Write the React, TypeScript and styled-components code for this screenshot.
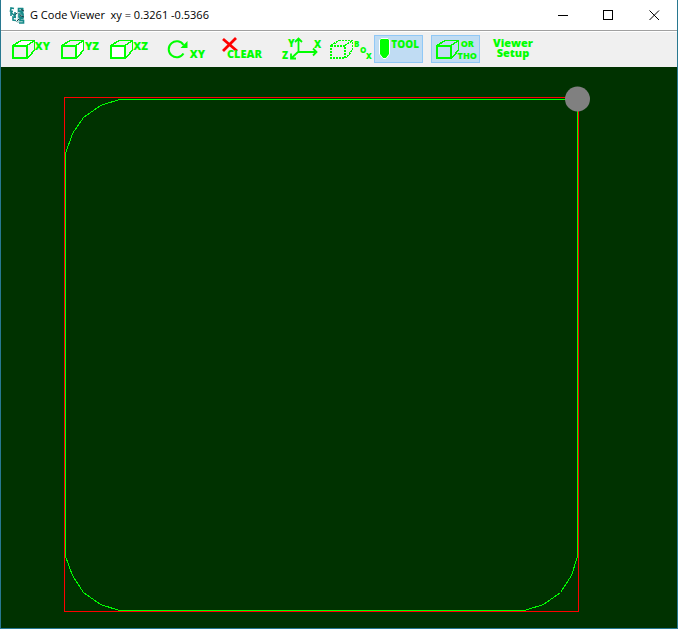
import React from "react";
import styled, { createGlobalStyle } from "styled-components";

const LIME = "#00ff00";

const GlobalStyle = createGlobalStyle`
  * { box-sizing: border-box; }
  body { margin: 0; background: #fff; font-family: "Open Sans", "Noto Sans", sans-serif; }
  button { font: inherit; color: inherit; background: none; padding: 0; }
`;

const Window = styled.div`
  display: flex;
  flex-direction: column;
  height: 100vh;
  margin-right: 2px;
  border: solid #287890;
  border-width: 0 1px 1px;
`;

const TitleBar = styled.header`
  display: flex;
  align-items: center;
  height: 31px;
  padding-left: 8px;
  background: #fff;
  border-bottom: 1px solid #a0a0a0;
`;

const Title = styled.h1`
  flex: 1;
  margin: 0 0 0 4px;
  font-size: 11px;
  font-weight: 400;
  line-height: 16px;
  color: #000;
  white-space: pre;
`;

const WindowButton = styled.button`
  display: grid;
  place-items: center;
  width: 46px;
  height: 30px;
  border: 0;
`;

const Toolbar = styled.div`
  display: flex;
  gap: 8px;
  height: 36px;
  padding: 3px 6px;
  background: #f0f0f0;
  border-top: 1px solid #fff;
`;

const Group = styled.div`
  display: flex;
`;

const Tool = styled.button<{ $pressed?: boolean }>`
  display: grid;
  width: 49px;
  height: 28px;
  border: 1px solid ${(p) => (p.$pressed ? "#90c8f6" : "transparent")};
  background: ${(p) => (p.$pressed ? "#c0dcf3" : "transparent")};
  color: ${LIME};

  > * { grid-area: 1 / 1; }
`;

const Label = styled.span<{ $at?: "start" | "end" }>`
  align-self: ${(p) => p.$at ?? "start"};
  justify-self: end;
  padding: 5px 5px 3px;
  font-size: 11px;
  font-weight: 800;
  line-height: 10px;
`;

const SmallLabel = styled(Label)`
  padding: 3px;
  font-size: 10px;
`;

const StackLabel = styled(Label)`
  display: grid;
  justify-items: center;
  padding: 2px;
  font-size: 9px;
  line-height: 12px;
`;

const CenterLabel = styled(Label)`
  justify-self: center;
  padding: 2px 4px;
  text-align: center;
`;

const Glyph = styled.svg`
  display: block;
  font-size: 10px;
  font-weight: 800;
`;

const Canvas = styled.main`
  flex: 1;
  min-height: 0;
  background: #003200;
`;

const Plot = styled.svg`
  display: block;
  width: 100%;
  height: 100%;
`;

const Art = ({ children }: { children: React.ReactNode }) => (
  <Glyph width="47" height="26" viewBox="0 0 47 26" fill="none" stroke={LIME}>
    {children}
  </Glyph>
);

const FACES = {
  top: "M5 10 14 4.5H27L19 10Z",
  side: "M19 10 27 4.5V14L19 22Z",
  front: "M5 10H19V22H5Z",
};

const Cube = ({ face, dotted }: { face?: keyof typeof FACES; dotted?: boolean }) => (
  <g strokeDasharray={dotted ? "2 1" : undefined} shapeRendering="crispEdges">
    {face && <path d={FACES[face]} fill="#fff" stroke="none" />}
    <path d="M5 10H19V22H5Z" strokeWidth="2" />
    <path d="M5 9.5 13 4.5H26.5V14L19.5 22.5M19 9.5 26.5 4.5" strokeWidth="1.5" />
  </g>
);

const AppIcon = () => (
  <svg width="17" height="17" viewBox="0 0 17 17" fill="none" aria-hidden="true">
    <path d="M9 1h6v15H8z" fill="#b9dedb" />
    <path
      d="M5 1.5 2 1 1.5 4 4 4.5M2 9V5.5L6 9V5M7 10.5 4 10 4 13 7 13.5M9.5 5V1.5h4V4h-4L14 6M10 7h4v3h-4zM14.5 11.5H11v2h3.5V16H10"
      stroke="#168989"
      strokeWidth="1.6"
    />
    <path d="M6 7.5 8.5 6M7.5 14.5 10 12M12 2.5 15 4M11 8.5 15 10" stroke="#173e46" />
  </svg>
);

export default function App() {
  return (
    <>
      <GlobalStyle />
      <Window>
        <TitleBar>
          <AppIcon />
          <Title>{"G Code Viewer  xy = 0.3261 -0.5366"}</Title>
          <WindowButton aria-label="Minimize">
            <svg width="11" height="11" stroke="#000" shapeRendering="crispEdges"><path d="M1 5.5H11" /></svg>
          </WindowButton>
          <WindowButton aria-label="Maximize">
            <svg width="11" height="11" stroke="#000" fill="none" shapeRendering="crispEdges"><path d="M.5 .5h9v9h-9z" /></svg>
          </WindowButton>
          <WindowButton aria-label="Close">
            <svg width="11" height="11" stroke="#000"><path d="M.5 .5 10 10M10 .5 .5 10" /></svg>
          </WindowButton>
        </TitleBar>

        <Toolbar role="toolbar" aria-label="View">
          <Group>
            <Tool><Art><Cube face="top" /></Art><Label>XY</Label></Tool>
            <Tool><Art><Cube face="side" /></Art><Label>YZ</Label></Tool>
            <Tool><Art><Cube face="front" /></Art><Label>XZ</Label></Tool>
          </Group>
          <Group>
            <Tool>
              <Art>
                <path d="M20.5 9A8 8 0 1 0 20.5 17.5" strokeWidth="2" />
                <path d="M24.5 5V12H17.5Z" fill={LIME} stroke="none" />
              </Art>
              <Label $at="end">XY</Label>
            </Tool>
          </Group>
          <Group>
            <Tool>
              <Art><path d="M3 3 17 15M16 2 3 15" stroke="#ff0000" strokeWidth="2.8" /></Art>
              <Label $at="end">CLEAR</Label>
            </Tool>
          </Group>
          <Group>
            <Tool aria-label="Axes">
              <Art>
                <path d="M21.5 3V16H38M21 16 14 22.5M18 6 21.5 2.5 25 6M36 12.5 39.5 16 36 19.5M14 17.5V22.5H19" strokeWidth="1.8" />
                <g fill={LIME} stroke="none">
                  <text x="11" y="11">Y</text>
                  <text x="5" y="23">Z</text>
                  <text x="37" y="12">X</text>
                </g>
              </Art>
            </Tool>
            <Tool aria-label="Box">
              <Art>
                <Cube dotted />
                <g fill={LIME} stroke="none" fontSize="8">
                  <text x="28" y="11">B</text>
                  <text x="34" y="17">O</text>
                  <text x="40" y="23">X</text>
                </g>
              </Art>
            </Tool>
            <Tool $pressed aria-pressed="true">
              <Art><path d="M4.5 4 6 2.5H13L14.5 4V18L11 22.5H8L4.5 18Z" fill={LIME} stroke="#fff" /></Art>
              <SmallLabel>TOOL</SmallLabel>
            </Tool>
          </Group>
          <Group>
            <Tool $pressed aria-pressed="true">
              <Art><Cube /></Art>
              <StackLabel>
                <span>OR</span>
                <span>THO</span>
              </StackLabel>
            </Tool>
          </Group>
          <Group>
            <Tool><CenterLabel>Viewer Setup</CenterLabel></Tool>
          </Group>
        </Toolbar>

        <Canvas>
          <Plot viewBox="0 0 676 561" preserveAspectRatio="xMinYMin meet" fill="none" role="img" aria-label="Tool path">
            <g shapeRendering="crispEdges">
              <path d="M63.5 30.5H577.5V544.5H63.5Z" stroke="#ff0000" />
              <path
                d="M576.5 32.5H118.5L99.5 38.5 82.5 50.5 71.5 66.5 64.5 86.5V489.5L71.5 508.5 82.5 525.5 99.5 537.5 118.5 543.5H523.5L542.5 537.5 559.5 525.5 570.5 508.5 576.5 489.5Z"
                stroke={LIME}
              />
            </g>
            <circle cx="576.5" cy="32" r="12.5" fill="#808080" />
          </Plot>
        </Canvas>
      </Window>
    </>
  );
}
